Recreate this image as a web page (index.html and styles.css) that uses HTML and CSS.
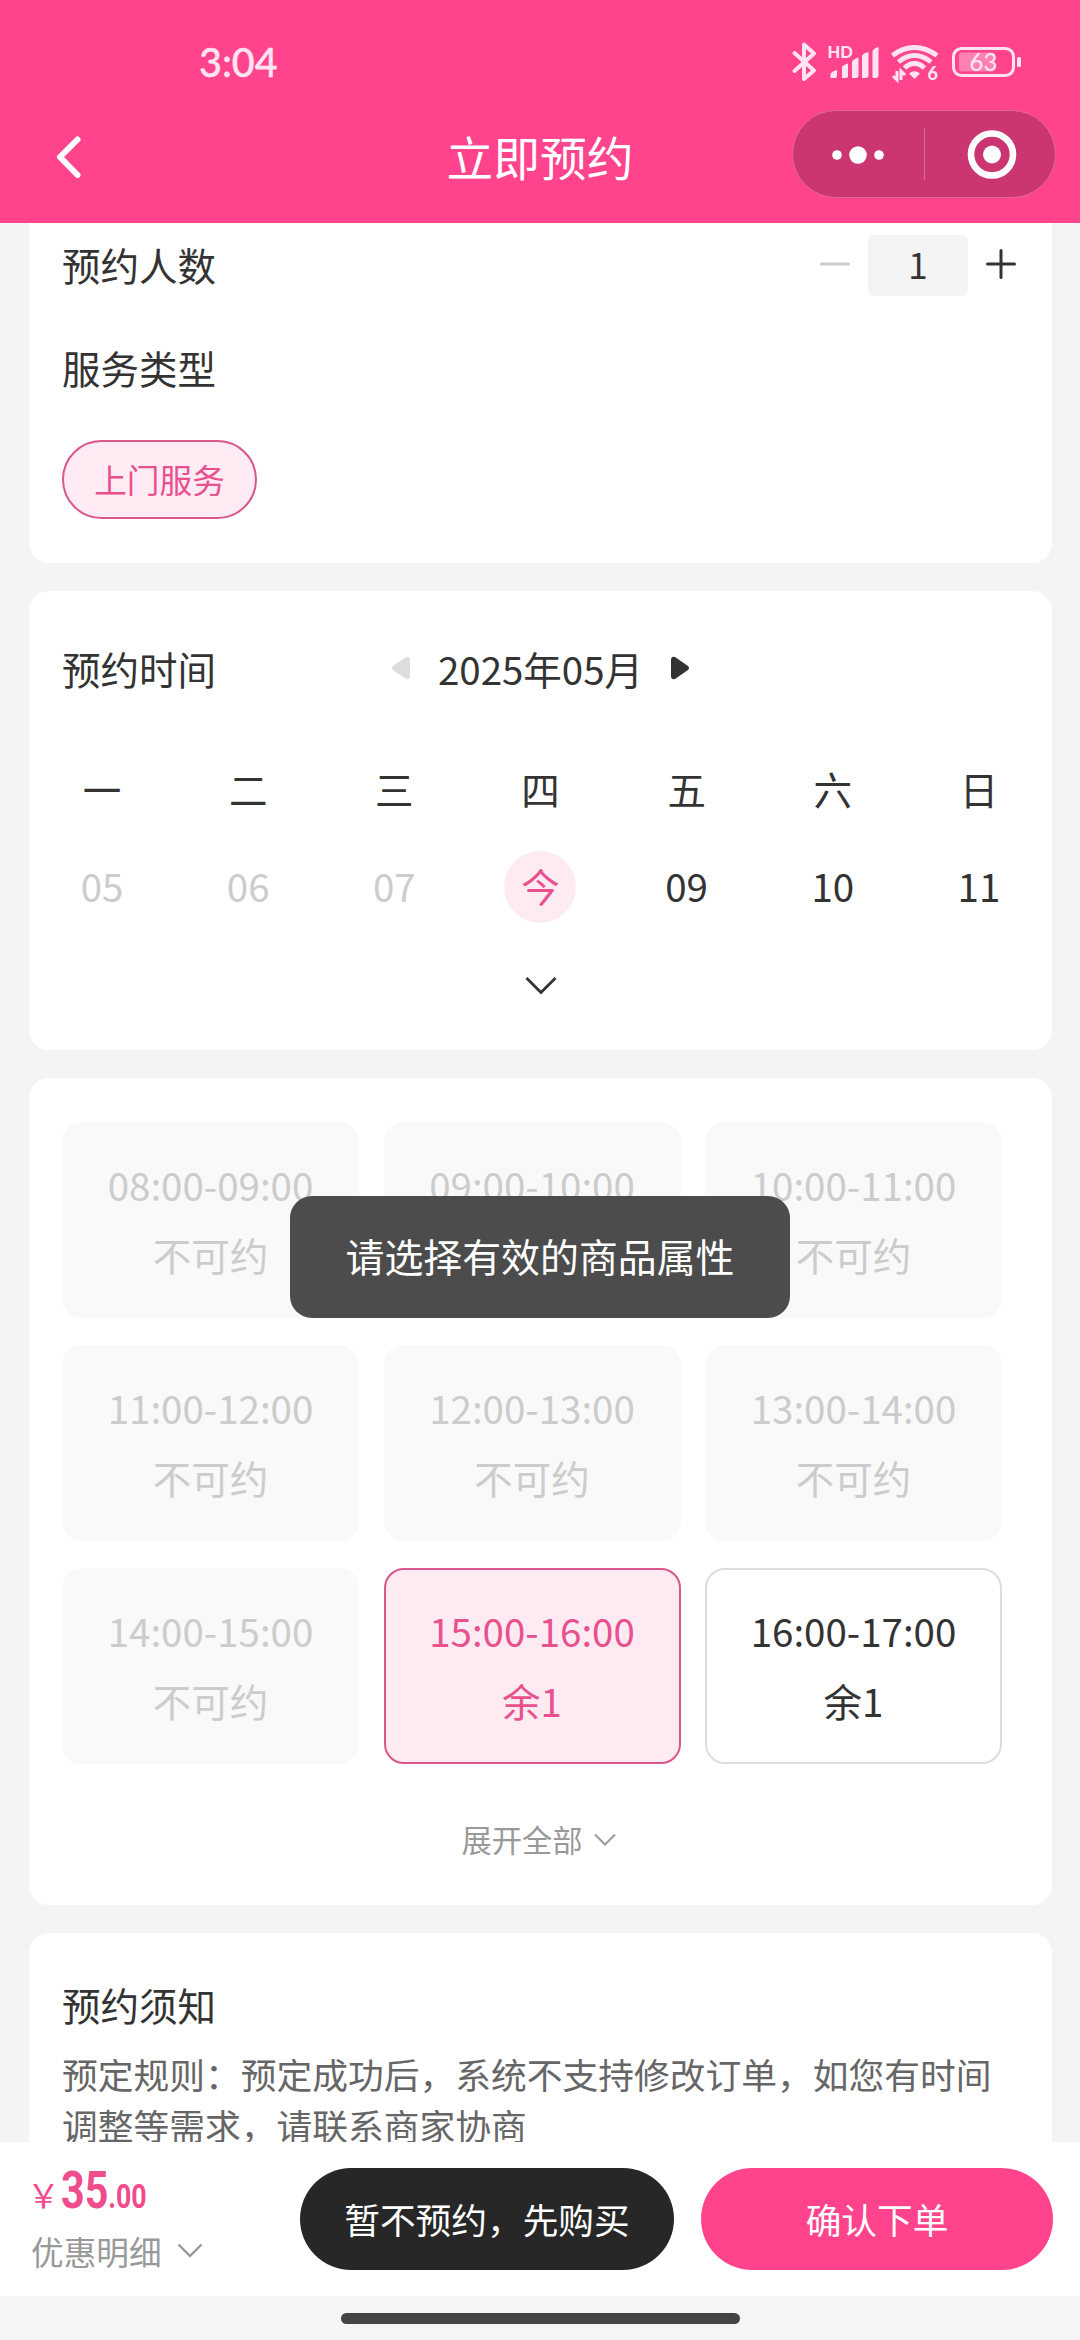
FILE: index.html
```html
<!DOCTYPE html>
<html lang="zh-CN">
<head>
<meta charset="utf-8">
<title>立即预约</title>
<link rel="stylesheet" href="styles.css">
</head>
<body>
<div class="app">
  <header class="header">
    <div class="status">
      <span class="clock">3:04</span>
      <div class="indicators">
        <svg class="icon-bt" width="26" height="42" viewBox="0 0 26 42"><path d="M2.500 12L22 29.500L12 38V3.500L22 12.500L2.500 30" fill="none" stroke="currentColor" stroke-width="4" stroke-linejoin="round" stroke-linecap="round"/></svg>
        <svg class="icon-signal" width="52" height="42" viewBox="0 0 52 42"><text class="hd" x="-.5" y="17">HD</text><path d="M2.500 37V33Q4 30 9 29V35Q9 37 7 37ZM14 37V26Q15 24 20 22.500V35Q20 37 18 37ZM24 37V21Q25 18 30.500 16.500V35Q30 37 28 37ZM34 37V15Q35 12 40.500 11V35Q40 37 38 37ZM44.500 37V10Q46 7 50.500 6V35Q50 37 48 37Z" fill="currentColor"/></svg>
        <svg class="icon-wifi" width="48" height="42" viewBox="0 0 48 42"><g fill="none" stroke="currentColor" stroke-width="4.800"><path d="M1.500 14.500Q12 6.500 23.500 6.500T46 14.500"/><path d="M7.500 21Q15 14.500 23.500 14.500T40 21"/><path d="M13.500 27Q18 22.500 23.500 22.500T33.500 27"/></g><path d="M18 32.500Q23.500 28 29 32.500L23.500 38Z" fill="currentColor"/><path d="M6 30V39L2 35M10 39V30L14 34" fill="none" stroke="currentColor" stroke-width="3"/><text class="six" x="36.500" y="39">6</text></svg>
        <svg class="icon-battery" width="70" height="42" viewBox="0 0 70 42"><rect x="7" y="11.500" width="36" height="19" rx="3" fill="#ff80b4"/><rect x="1.500" y="7.500" width="60" height="27" rx="8" fill="none" stroke="currentColor" stroke-width="3"/><rect x="65" y="16" width="4" height="10" rx="1.500" fill="currentColor"/><text class="level" x="31.500" y="30">63</text></svg>
      </div>
    </div>
    <div class="navbar">
      <svg class="back" width="28" height="46" viewBox="0 0 28 46"><path d="M23.500 5.500L6 23L23.500 41" fill="none" stroke="#fff" stroke-width="6" stroke-linecap="round" stroke-linejoin="round"/></svg>
      <h1 class="title">立即预约</h1>
      <div class="capsule">
        <svg width="131" height="86" viewBox="0 0 131 86"><g fill="#fff"><circle cx="44" cy="44" r="4.800"/><circle cx="65" cy="44" r="8.800"/><circle cx="86" cy="44" r="4.800"/></g></svg>
        <i class="capsule-line"></i>
        <svg width="130" height="86" viewBox="0 0 130 86"><circle cx="67" cy="43.500" r="21" fill="none" stroke="#fff" stroke-width="6.600"/><circle cx="67" cy="43.500" r="9" fill="#fff"/></svg>
      </div>
    </div>
  </header>

  <main class="content">
    <section class="card card-service">
      <div class="row">
        <span class="label">预约人数</span>
        <div class="stepper">
          <svg width="30" height="30" viewBox="0 0 30 30"><path d="M1.500 15H28.500" stroke="#ccc" stroke-width="3" stroke-linecap="round"/></svg>
          <span class="count">1</span>
          <svg width="30" height="30" viewBox="0 0 30 30"><path d="M1.500 15H28.500M15 1.500V28.500" stroke="#333" stroke-width="3" stroke-linecap="round"/></svg>
        </div>
      </div>
      <div class="row row-type"><span class="label">服务类型</span></div>
      <span class="tag">上门服务</span>
    </section>

    <section class="card card-calendar">
      <div class="month-row">
        <span class="label">预约时间</span>
        <div class="month">
          <svg width="19" height="26" viewBox="0 0 19 26"><path d="M15 2L2 11Q0 13 2 15L15 24Q19 25 19 21V5Q19 1 15 2Z" fill="#ddd"/></svg>
          <span>2025年05月</span>
          <svg width="19" height="26" viewBox="0 0 19 26"><path d="M4 2L17 11Q19 13 17 15L4 24Q0 25 0 21V5Q0 1 4 2Z" fill="#333"/></svg>
        </div>
      </div>
      <div class="week names"><span>一</span><span>二</span><span>三</span><span>四</span><span>五</span><span>六</span><span>日</span></div>
      <div class="week days"><span class="past">05</span><span class="past">06</span><span class="past">07</span><span class="today">今</span><span>09</span><span>10</span><span>11</span></div>
      <svg class="expand" width="34" height="20" viewBox="0 0 34 20"><path d="M2.500 2L17 16.500L31.500 2" fill="none" stroke="#333" stroke-width="2.800"/></svg>
    </section>

    <section class="card card-slots">
      <div class="slots">
        <div class="slot off"><span>08:00-09:00</span><span>不可约</span></div>
        <div class="slot off"><span>09:00-10:00</span><span>不可约</span></div>
        <div class="slot off"><span>10:00-11:00</span><span>不可约</span></div>
        <div class="slot off"><span>11:00-12:00</span><span>不可约</span></div>
        <div class="slot off"><span>12:00-13:00</span><span>不可约</span></div>
        <div class="slot off"><span>13:00-14:00</span><span>不可约</span></div>
        <div class="slot off"><span>14:00-15:00</span><span>不可约</span></div>
        <div class="slot active"><span>15:00-16:00</span><span>余1</span></div>
        <div class="slot"><span>16:00-17:00</span><span>余1</span></div>
      </div>
      <div class="more"><span>展开全部</span><svg width="22" height="14" viewBox="0 0 22 14"><path d="M1 1.500L11 11.500L21 1.500" fill="none" stroke="#999" stroke-width="2"/></svg></div>
    </section>

    <section class="card card-notice">
      <h2 class="label">预约须知</h2>
      <p class="rules">预定规则：预定成功后，系统不支持修改订单，如您有时间调整等需求，请联系商家协商</p>
    </section>
  </main>

  <footer class="footer">
    <div class="summary">
      <div class="price"><span class="yen">￥</span><span class="amount"><b>35</b><small>.00</small></span></div>
      <div class="detail"><span>优惠明细</span><svg width="26" height="16" viewBox="0 0 26 16"><path d="M1.500 1.500L13 13L24.500 1.500" fill="none" stroke="#999" stroke-width="2.400"/></svg></div>
    </div>
    <button class="btn btn-dark">暂不预约，先购买</button>
    <button class="btn btn-pink">确认下单</button>
  </footer>
  <div class="home"><i></i></div>

  <div class="toast">请选择有效的商品属性</div>
</div>
</body>
</html>
```

FILE: styles.css
```css
* { box-sizing: border-box; }
body { margin: 0; }
svg { display: block; flex: none; overflow: visible; }

.app {
  position: relative;
  display: flex;
  flex-direction: column;
  width: 1080px;
  height: 2340px;
  overflow: hidden;
  background: #f4f4f5;
  color: #333;
  font-family: "Noto Sans CJK SC", sans-serif;
  font-size: 38.5px;
  line-height: 52px;
  text-spacing-trim: space-all;
}

.header { flex: none; height: 223px; background: #ff448d; color: #fff; }
.status {
  display: flex;
  justify-content: space-between;
  height: 100px;
  padding: 0 58px 0 199px;
  color: #ffe3f2;
}
.clock { padding-top: 36px; font: 500 39.5px/52px Lato, sans-serif; -webkit-text-stroke: .4px; }
.indicators { display: flex; padding-top: 41px; }
.icon-bt { margin-right: 10px; }
.icon-signal { margin-right: 11px; }
.icon-wifi { margin-right: 13px; }
.hd { font: 900 16.5px Lato, sans-serif; fill: currentColor; }
.six { font: 900 18px Lato, sans-serif; fill: currentColor; }
.level { font: 500 24px Lato, sans-serif; fill: currentColor; text-anchor: middle; }

.navbar {
  display: grid;
  grid-template-columns: 264px 1fr 264px;
  align-items: center;
  height: 108px;
  padding: 0 24px;
}
.title {
  margin: 0;
  padding-top: 3px;
  font-size: 46.7px;
  font-weight: 400;
  line-height: 60px;
  text-align: center;
}
.back { margin: 5px 0 0 30px; }
.capsule {
  display: flex;
  align-items: center;
  width: 264px;
  height: 88px;
  border: 1px solid #e0699a;
  border-radius: 44px;
  background: #cb3672;
}
.capsule-line { width: 1px; height: 52px; background: #dc6a9a; }

.content {
  display: flex;
  flex: 1;
  flex-direction: column;
  gap: 28px;
  min-height: 0;
  padding: 0 28px 0 29px;
  overflow: hidden;
}
.card { flex: none; border-radius: 20px; background: #fff; }
.label { margin: -2px 0 0; font-size: 38.5px; font-weight: 400; line-height: 52px; }

.card-service { height: 340px; padding: 14px 33px 0; border-radius: 0 0 20px 20px; }
.row { display: flex; align-items: center; justify-content: space-between; height: 56px; }
.row-type { margin-top: 47px; }
.stepper { display: flex; align-items: center; gap: 18px; padding-right: 3px; }
.stepper svg { margin-top: -2px; }
.count {
  width: 100px;
  height: 61px;
  border-radius: 6px;
  background: #f4f4f4;
  font-size: 35px;
  line-height: 58px;
  text-align: center;
}
.tag {
  display: block;
  width: 195px;
  height: 79px;
  margin-top: 44px;
  border: 2px solid #d9578b;
  border-radius: 40px;
  background: #feebf3;
  color: #e8508e;
  font-size: 32.7px;
  line-height: 74px;
  text-align: center;
}

.card-calendar { height: 459px; padding-top: 52px; }
.month-row { display: grid; grid-template-columns: 1fr auto 1fr; align-items: center; padding: 0 33px; }
.month { display: flex; align-items: center; gap: 28px; margin-top: -1px; height: 52px; }
.week { display: grid; grid-template-columns: repeat(7, 1fr); justify-items: center; }
.names { margin-top: 68px; }
.days { align-items: center; height: 72px; margin-top: 37px; line-height: 68px; }
.days span { height: 72px; }
.past { color: #ccc; }
.today { width: 72px; border-radius: 50%; background: #feebf2; color: #e8508e; text-align: center; }
.expand { margin: 53px auto 0; }

.card-slots { height: 827px; padding: 44px 49px 0 33px; }
.slots { display: grid; grid-template-columns: repeat(3, 297px); grid-auto-rows: 196px; gap: 27px 24.5px; }
.slot {
  display: flex;
  flex-direction: column;
  align-items: center;
  gap: 18px;
  padding-top: 34px;
  border: 2px solid #ddd;
  border-radius: 20px;
}
.off { border-color: #f9f9f9; background: #f9f9f9; color: #ccc; }
.active { border-color: #d9578b; background: #feebf2; color: #e8508e; }
.more {
  display: flex;
  align-items: center;
  justify-content: center;
  gap: 11px;
  margin-top: 49px;
  padding-left: 12px;
  color: #999;
  font-size: 30.3px;
}
.more svg { margin-top: 2px; }

.card-notice { height: 300px; padding: 47px 33px 0; }
.rules { margin: 18px 0 0; color: #666; font-size: 35.75px; line-height: 51px; }

.footer {
  display: flex;
  flex: none;
  align-items: flex-start;
  height: 154px;
  padding: 26px 27px 0 31px;
  background: #fff;
}
.summary { width: 269px; }
.price { display: flex; align-items: baseline; height: 57px; color: #ef4c8d; }
.yen { width: 30px; margin-left: -4px; font-size: 33px; line-height: 44px; }
.amount {
  margin-left: 4px;
  font-family: Roboto, sans-serif;
  line-height: 44px;
  transform: scaleX(.785);
  transform-origin: 0 50%;
}
.amount b { font-size: 52.5px; font-weight: 700; }
.amount small { font-size: 34px; font-weight: 700; }
.detail { display: flex; align-items: center; gap: 15px; color: #999; font-size: 32.7px; line-height: 52px; }
.btn {
  height: 102px;
  padding: 0;
  border: 0;
  border-radius: 51px;
  color: #fff;
  font-family: inherit;
  font-size: 35.7px;
  line-height: 98px;
  text-spacing-trim: space-all;
}
.btn-dark { width: 374px; margin-right: 27px; background: #272727; }
.btn-pink { width: 352px; background: #ff448d; }

.home { flex: none; height: 44px; padding-top: 17px; background: #f5f5f5; }
.home i { display: block; width: 399px; height: 11px; margin: 0 auto; border-radius: 6px; background: #444; }

.toast {
  position: absolute;
  top: 1196px;
  left: 290px;
  width: 500px;
  height: 122px;
  border-radius: 22px;
  background: #4c4c4c;
  color: #fff;
  font-size: 38.9px;
  line-height: 118px;
  text-align: center;
}
```
